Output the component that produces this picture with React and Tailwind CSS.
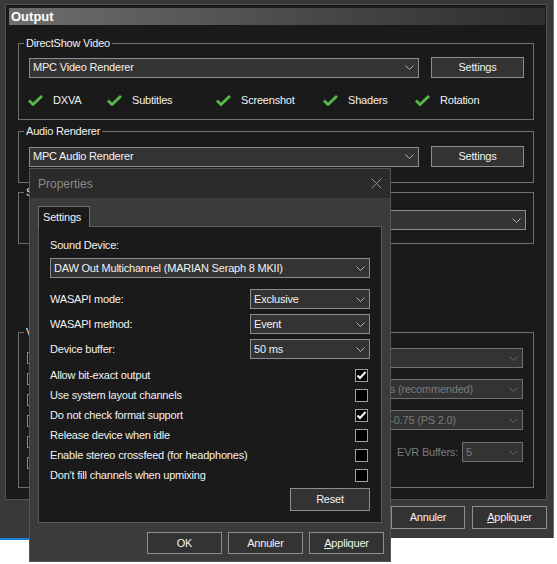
import React from "react";

const font = "font-['Liberation_Sans',Arial,sans-serif]";

function Chevron({ color = "#b4b4b4" }) {
  return (
    <svg width="9" height="5" viewBox="0 0 9 5" className="shrink-0">
      <path d="M0.5 0.5L4.5 4.5L8.5 0.5" fill="none" stroke={color} strokeWidth="1" />
    </svg>
  );
}

function Combo({ value, className = "", disabled = false, textClass = "" }) {
  return (
    <div
      className={`flex items-center h-[20px] bg-[#333333] border pr-[4px] ${
        disabled ? "border-[#6f6f6f]" : "border-[#8e8e8e]"
      } ${className}`}
    >
      <span
        className={`flex-1 pl-[3px] whitespace-nowrap overflow-hidden ${
          disabled ? "text-[#7a7a7a]" : "text-[#f2f2f2]"
        } ${textClass}`}
      >
        {value}
      </span>
      <Chevron color={disabled ? "#6a6a6a" : "#b4b4b4"} />
    </div>
  );
}

function Button({ children, className = "" }) {
  return (
    <div
      className={`flex items-center justify-center bg-[#333333] border border-[#8e8e8e] text-[#f2f2f2] ${className}`}
    >
      {children}
    </div>
  );
}

function GreenCheck() {
  return (
    <svg width="15" height="11" viewBox="0 0 15 11" className="shrink-0">
      <path d="M1 5.5L5 9.5L14 1" fill="none" stroke="#58b84c" strokeWidth="2.8" />
    </svg>
  );
}

function CheckBox({ checked }) {
  return (
    <div className="w-[13px] h-[13px] bg-black border border-[#a0a0a0] flex items-center justify-center shrink-0">
      {checked && (
        <svg width="11" height="11" viewBox="0 0 11 11">
          <path d="M1.5 5.5L4 8L9.5 2" fill="none" stroke="#ffffff" strokeWidth="2" />
        </svg>
      )}
    </div>
  );
}

function Group({ label, className = "", children }) {
  return (
    <fieldset className={`border border-[#707070] ${className}`}>
      <legend className="ml-[5px] px-[2px] leading-[14px] text-[#f2f2f2]">{label}</legend>
      {children}
    </fieldset>
  );
}

const features = [
  { label: "DXVA", w: "w-[79px]" },
  { label: "Subtitles", w: "w-[109px]" },
  { label: "Screenshot", w: "w-[107px]" },
  { label: "Shaders", w: "w-[92px]" },
  { label: "Rotation", w: "" },
];

const options = [
  { label: "Allow bit-exact output", checked: true },
  { label: "Use system layout channels", checked: false },
  { label: "Do not check format support", checked: true },
  { label: "Release device when idle", checked: false },
  { label: "Enable stereo crossfeed (for headphones)", checked: false },
  { label: "Don't fill channels when upmixing", checked: false },
];

function PropertiesDialog() {
  return (
    <div className="absolute left-[29px] top-[168px] w-[362px] h-[394px] bg-[#3b3b3b] border border-[#565656] flex flex-col">
      <div className="h-[29px] bg-[#2b2b2b] flex items-center justify-between pl-[8px] pr-[8px]">
        <span className="text-[12px] tracking-normal text-[#8a8a8a]">Properties</span>
        <svg width="11" height="11" viewBox="0 0 11 11">
          <path d="M0.5 0.5L10.5 10.5M10.5 0.5L0.5 10.5" stroke="#8c8c8c" strokeWidth="1" />
        </svg>
      </div>
      <div className="pt-[8px] pl-[8px] pr-[8px]">
        <div className="relative z-10 -mb-px w-[52px] h-[21px] border border-b-0 border-[#707070] bg-[#1a1a1a] text-[#f2f2f2] pl-[4px] flex items-center">
          Settings
        </div>
        <div className="h-[297px] border border-[#5c5c5c] bg-[#1a1a1a] pt-[11px] px-[11px] flex flex-col">
          <div className="leading-[14px] text-[#f2f2f2]">Sound Device:</div>
          <Combo value="DAW Out Multichannel (MARIAN Seraph 8 MKII)" className="mt-[6px]" />
          <div className="mt-[11px] flex items-center justify-between text-[#f2f2f2]">
            <span>WASAPI mode:</span>
            <Combo value="Exclusive" className="w-[120px]" />
          </div>
          <div className="mt-[5px] flex items-center justify-between text-[#f2f2f2]">
            <span>WASAPI method:</span>
            <Combo value="Event" className="w-[120px]" />
          </div>
          <div className="mt-[5px] flex items-center justify-between text-[#f2f2f2]">
            <span>Device buffer:</span>
            <Combo value="50 ms" className="w-[120px]" />
          </div>
          <div className="mt-[6px] flex flex-col">
            {options.map((o) => (
              <div key={o.label} className="h-[20px] flex items-center justify-between text-[#f2f2f2]">
                <span>{o.label}</span>
                <div className="mr-[2px]">
                  <CheckBox checked={o.checked} />
                </div>
              </div>
            ))}
          </div>
          <Button className="mt-[3px] self-end w-[80px] h-[23px]">Reset</Button>
        </div>
      </div>
      <div className="mt-[9px] flex justify-end gap-[6px] pr-[6px]">
        <Button className="w-[75px] h-[22px]">OK</Button>
        <Button className="w-[75px] h-[22px]">Annuler</Button>
        <Button className="w-[75px] h-[22px]">
          <span>
            <span className="underline underline-offset-[1px]">A</span>ppliquer
          </span>
        </Button>
      </div>
    </div>
  );
}

export default function App() {
  return (
    <div className={`relative w-[557px] h-[564px] bg-white overflow-hidden text-[11px] tracking-[-0.2px] ${font}`}>
      <div className="w-[554px] h-[538px] bg-[#393939] border-r border-[#6b6b6b] pt-[4px] pl-[5px] pr-[6px] flex flex-col">
        <div className="h-[496px] border border-[#525252] bg-[#1a1a1a] pt-[3px] pl-[3px] pr-[1px] flex flex-col">
          <div className="h-[17px] bg-linear-to-r from-[#6e6e6e] to-[#2e2e2e] flex items-center pl-[2px] text-[13px] tracking-normal font-bold text-white">
            Output
          </div>
          <div className="ml-[9px] mr-[11px] flex flex-col">
            <Group label="DirectShow Video" className="mt-[11px] h-[84px]">
              <div className="pt-[7px] pl-[10px] pr-[9px] flex items-center justify-between">
                <Combo value="MPC Video Renderer" className="w-[390px]" />
                <Button className="w-[93px] h-[21px]">Settings</Button>
              </div>
              <div className="mt-[14px] h-[16px] pl-[9px] flex items-center text-[#f2f2f2]">
                {features.map((f) => (
                  <div key={f.label} className={`flex items-center ${f.w}`}>
                    <GreenCheck />
                    <span className="ml-[10px]">{f.label}</span>
                  </div>
                ))}
              </div>
            </Group>
            <Group label="Audio Renderer" className="mt-[4px] h-[59px]">
              <div className="pt-[8px] pl-[10px] pr-[9px] flex items-center justify-between">
                <Combo value="MPC Audio Renderer" className="w-[390px]" />
                <Button className="w-[93px] h-[21px]">Settings</Button>
              </div>
            </Group>
            <Group label="Subtitle Renderer" className="mt-[2px] h-[59px]">
              <div className="pt-[11px] pl-[10px] pr-[7px]">
                <Combo value="" />
              </div>
            </Group>
            <Group label="Video Renderer Settings" className="mt-[81px] h-[163px]">
              <div className="flex">
                <div className="pt-[13px] pl-[8px] flex flex-col gap-[9px] flex-1">
                  {[0, 1, 2, 3, 4, 5].map((i) => (
                    <div key={i} className="w-[12px] h-[12px] border border-[#8a8a8a] bg-[#111111]" />
                  ))}
                </div>
                <div className="pt-[9px] mr-[10px] w-[260px] flex flex-col">
                  <Combo value="" disabled />
                  <Combo
                    value="3D surfaces (recommended)"
                    disabled
                    className="mt-[11px]"
                    textClass="text-right pr-[36px]"
                  />
                  <Combo
                    value="Bicubic A=-0.75 (PS 2.0)"
                    disabled
                    className="mt-[11px]"
                    textClass="text-right pr-[53px]"
                  />
                  <div className="mt-[12px] flex items-center justify-end text-[#7a7a7a]">
                    <span className="mr-[4px]">EVR Buffers:</span>
                    <Combo value="5" disabled className="w-[61px]" />
                  </div>
                </div>
              </div>
            </Group>
          </div>
        </div>
        <div className="mt-[6px] flex justify-end gap-[7px]">
          <Button className="w-[75px] h-[23px]">OK</Button>
          <Button className="w-[74px] h-[23px]">Annuler</Button>
          <Button className="w-[75px] h-[23px]">
            <span>
              <span className="underline underline-offset-[1px]">A</span>ppliquer
            </span>
          </Button>
        </div>
      </div>
      <div className="w-[30px] h-[2px] bg-[#1a7fd6]" />
      <PropertiesDialog />
    </div>
  );
}
